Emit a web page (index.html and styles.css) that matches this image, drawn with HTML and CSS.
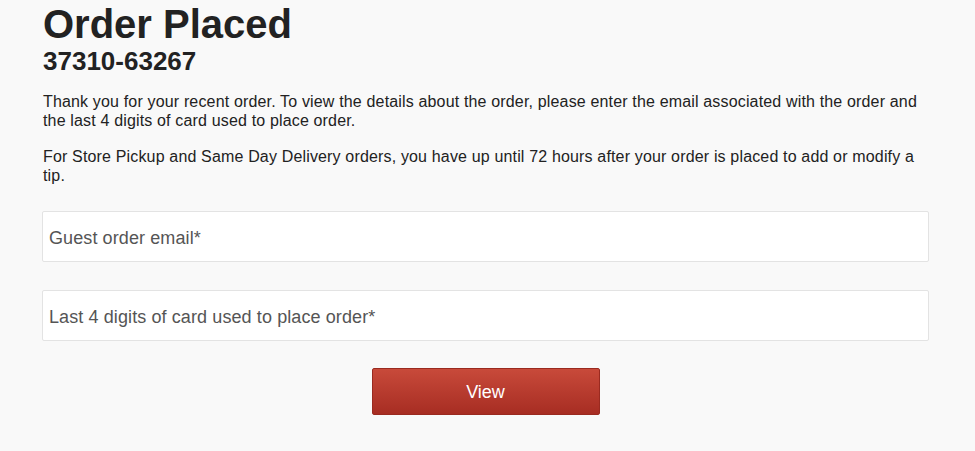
FILE: index.html
```html
<!DOCTYPE html>
<html lang="en">
<head>
<meta charset="utf-8">
<title>Order Placed</title>
<link rel="stylesheet" href="styles.css">
</head>
<body>
<main class="page">
  <h1 class="title">Order Placed</h1>
  <h2 class="order-number">37310-63267</h2>
  <p class="intro">Thank you for your recent order. To view the details about the order, please enter the email associated with the order and the last 4 digits of card used to place order.</p>
  <p class="intro intro-second">For Store Pickup and Same Day Delivery orders, you have up until 72 hours after your order is placed to add or modify a tip.</p>
  <form class="lookup">
    <input class="field" type="email" placeholder="Guest order email*">
    <input class="field field-last" type="text" placeholder="Last 4 digits of card used to place order*">
    <button class="view-btn" type="button">View</button>
  </form>
</main>
</body>
</html>
```
FILE: styles.css
```css
html, body {
  margin: 0;
  padding: 0;
  background: #f9f9f9;
}
body {
  font-family: "Liberation Sans", Arial, sans-serif;
  color: #222;
}
.page {
  padding: 2px 46px 0 42px;
}
.title {
  margin: 0;
  font-size: 40px;
  line-height: 44px;
  font-weight: bold;
  color: #222;
  padding-left: 1px;
}
.order-number {
  margin: 0;
  font-size: 26px;
  line-height: 30px;
  font-weight: bold;
  color: #222;
  padding-left: 1px;
}
.intro {
  margin: 17px 0 0;
  font-size: 16px;
  line-height: 18.5px;
  letter-spacing: 0.16px;
  color: #222;
  padding-left: 1px;
}
.intro-second {
  margin-top: 18px;
}
.lookup {
  display: flex;
  flex-direction: column;
  margin-top: 26px;
}
.field {
  box-sizing: border-box;
  width: 100%;
  height: 51px;
  margin: 0 0 28px;
  padding: 4px 6px 0;
  border: 1px solid #e3e3e3;
  border-radius: 2px;
  background: #fff;
  font-family: "Liberation Sans", Arial, sans-serif;
  font-size: 18px;
  letter-spacing: 0.1px;
  color: #555;
  outline: none;
}
.field-last {
  margin-bottom: 27px;
}
.field::placeholder {
  color: #555;
  opacity: 1;
}
.view-btn {
  align-self: center;
  width: 228px;
  height: 47px;
  padding: 1px 0 0;
  border: 1px solid #9a2a20;
  border-radius: 2px;
  background: linear-gradient(to bottom, #c84a3a, #a72d23);
  color: #fff;
  font-family: "Liberation Sans", Arial, sans-serif;
  font-size: 18px;
  cursor: pointer;
}
```
